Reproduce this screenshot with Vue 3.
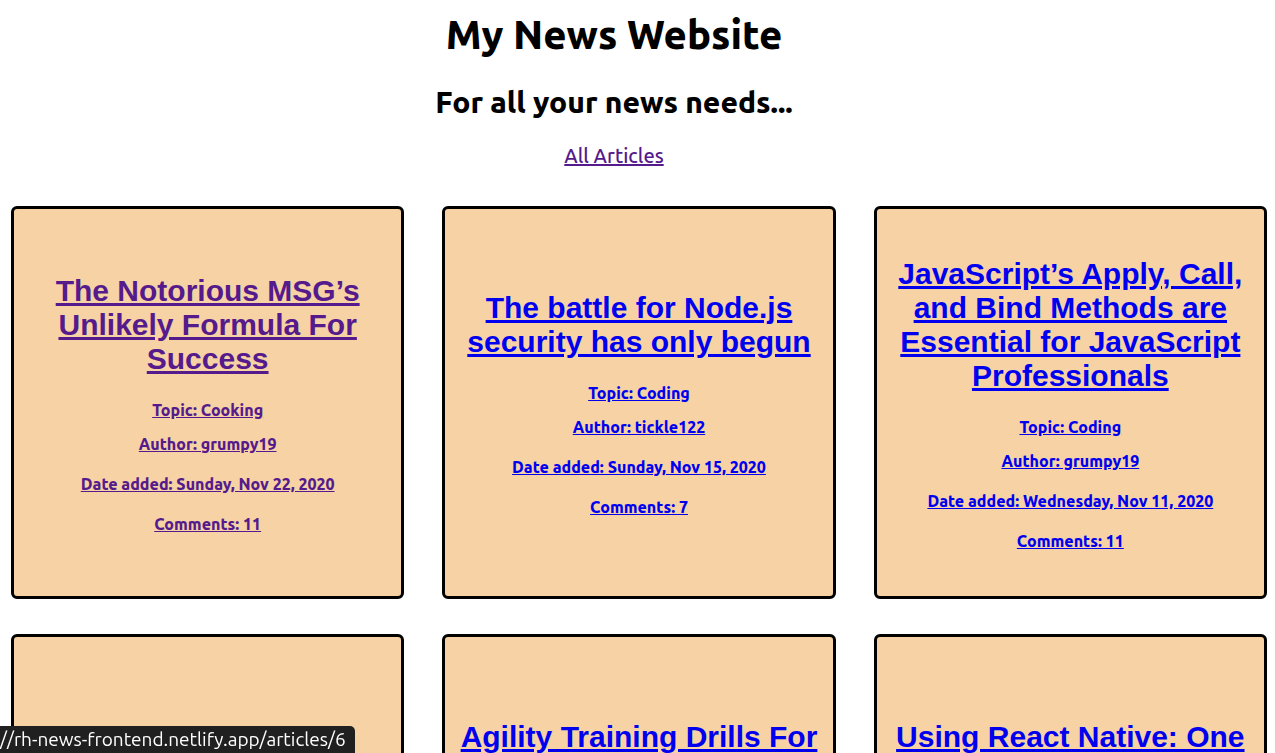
<script setup>
const articles = [
  { title: 'The Notorious MSG’s Unlikely Formula For Success', topic: 'Cooking', author: 'grumpy19', date: 'Sunday, Nov 22, 2020', comments: 11, visited: true },
  { title: 'The battle for Node.js security has only begun', topic: 'Coding', author: 'tickle122', date: 'Sunday, Nov 15, 2020', comments: 7 },
  { title: 'JavaScript’s Apply, Call, and Bind Methods are Essential for JavaScript Professionals', topic: 'Coding', author: 'grumpy19', date: 'Wednesday, Nov 11, 2020', comments: 11 },
  {},
  { title: 'Agility Training Drills For' },
  { title: 'Using React Native: One' },
]
</script>

<template>
  <div class="page">
    <header class="header">
      <h1>My News Website</h1>
      <h2>For all your news needs...</h2>
      <nav><a href="#articles" class="visited">All Articles</a></nav>
    </header>
    <main id="articles" class="grid">
      <article v-for="(a, i) in articles" :key="i" class="card" :class="{ preview: !a.topic }">
        <a v-if="a.title" href="#articles" :class="{ visited: a.visited }">
          <h3>{{ a.title }}</h3>
          <template v-if="a.topic">
            <p class="topic">Topic: {{ a.topic }}</p>
            <p class="author">Author: {{ a.author }}</p>
            <p class="meta">Date added: {{ a.date }}</p>
            <p class="meta">Comments: {{ a.comments }}</p>
          </template>
        </a>
      </article>
    </main>
    <div class="status">//rh-news-frontend.netlify.app/articles/6</div>
  </div>
</template>

<style>
body { overflow: hidden; }
</style>

<style scoped>
.page {
  height: 100vh;
  overflow: hidden;
  background: #fff;
  color: #000;
  font-family: Ubuntu, "Open Sans", "Noto Sans", sans-serif;
  font-weight: 500;
}
.header {
  margin-right: 47px;
  padding-top: 11px;
  text-align: center;
}
h1, h2, h3, p { margin: 0; }
h1 { font-size: 40px; line-height: 48px; font-weight: 800; }
h2 { margin-top: 25px; font-size: 30px; line-height: 36px; font-weight: 800; }
nav { margin-top: 23px; font-size: 20px; line-height: 26px; }
a { color: #00e; text-decoration: underline; }
a.visited { color: #551a8b; }
.grid {
  display: grid;
  grid-template-columns: repeat(3, minmax(0, 1fr));
  column-gap: 38px;
  row-gap: 35px;
  margin: 37px 8px 0 11px;
}
.card {
  box-sizing: border-box;
  display: flex;
  align-items: center;
  justify-content: center;
  aspect-ratio: 1;
  padding: 2px 12px 0;
  border: 3px solid #000;
  border-radius: 6px;
  background: #f6d2a4;
  text-align: center;
}
.preview { align-items: flex-start; padding-top: 83px; }
h3 {
  font-family: "Liberation Sans", Arial, sans-serif;
  font-size: 30px;
  line-height: 34px;
}
p { font-size: 16px; line-height: 20px; font-weight: 800; }
.topic { margin-top: 24px; }
.author { margin-top: 14px; }
.meta { margin-top: 20px; }
.status {
  position: fixed;
  left: 0;
  bottom: 0;
  padding-right: 9px;
  border-top-right-radius: 5px;
  background: #202020;
  color: #fff;
  font-size: 19px;
  font-weight: 400;
  line-height: 27px;
}
</style>
